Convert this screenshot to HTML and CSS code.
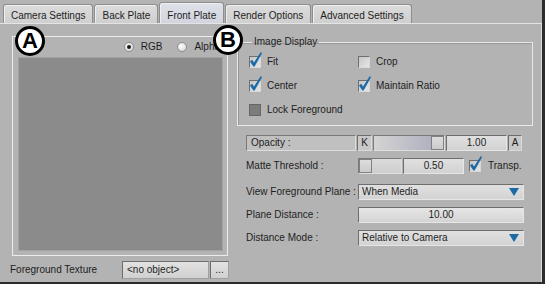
FILE: index.html
```html
<!DOCTYPE html>
<html>

<head>
    <meta charset="utf-8" />
    <meta name="viewport" content="width=device-width, initial-scale=1.0" />
    <title>Front Plate</title>
    <link rel="stylesheet" href="styles.css">
</head>

<body>
    <div class="window">
        <div class="tabs">
            <div class="tab">Camera Settings</div>
            <div class="tab">Back Plate</div>
            <div class="tab tab-active">Front Plate</div>
            <div class="tab">Render Options</div>
            <div class="tab">Advanced Settings</div>
        </div>

        <div class="panel">
            <div class="left">
                <div class="viewer">
                    <div class="channels">
                        <span class="radio"><span class="radio-dot radio-on"></span>RGB</span>
                        <span class="radio"><span class="radio-dot"></span>Alpha</span>
                    </div>
                    <div class="viewport"></div>
                </div>
                <div class="texture-row">
                    <span class="texture-label">Foreground Texture</span>
                    <span class="btn obj-btn">&lt;no object&gt;</span>
                    <span class="btn dots-btn">...</span>
                </div>
            </div>

            <div class="right">
                <fieldset class="group">
                    <legend>Image Display</legend>
                    <div class="checks">
                        <div class="check">
                            <span class="box">
                                <svg class="tick" width="15" height="17" viewBox="0 0 15 17"><path d="M2 10.5 L4.2 8.8 L6 11.6 L12.8 1 L14 2.2 L6.6 15.6 L5.4 15.6 Z" /></svg>
                            </span>Fit
                        </div>
                        <div class="check"><span class="box"></span>Crop</div>
                        <div class="check">
                            <span class="box">
                                <svg class="tick" width="15" height="17" viewBox="0 0 15 17"><path d="M2 10.5 L4.2 8.8 L6 11.6 L12.8 1 L14 2.2 L6.6 15.6 L5.4 15.6 Z" /></svg>
                            </span>Center
                        </div>
                        <div class="check">
                            <span class="box">
                                <svg class="tick" width="15" height="17" viewBox="0 0 15 17"><path d="M2 10.5 L4.2 8.8 L6 11.6 L12.8 1 L14 2.2 L6.6 15.6 L5.4 15.6 Z" /></svg>
                            </span>Maintain Ratio
                        </div>
                        <div class="check"><span class="box box-disabled"></span>Lock Foreground</div>
                    </div>
                </fieldset>

                <div class="rows">
                    <div class="row">
                        <span class="field-label">Opacity :</span>
                        <span class="key">K</span>
                        <span class="slider slider-opacity"><span class="thumb"></span></span>
                        <span class="value">1.00</span>
                        <span class="key key-a">A</span>
                    </div>
                    <div class="row">
                        <span class="row-label">Matte Threshold :</span>
                        <span class="slider slider-matte"><span class="thumb"></span></span>
                        <span class="value value-matte">0.50</span>
                        <span class="check check-inline">
                            <span class="box">
                                <svg class="tick" width="15" height="17" viewBox="0 0 15 17"><path d="M2 10.5 L4.2 8.8 L6 11.6 L12.8 1 L14 2.2 L6.6 15.6 L5.4 15.6 Z" /></svg>
                            </span>Transp.
                        </span>
                    </div>
                    <div class="row row-spaced">
                        <span class="row-label">View Foreground Plane :</span>
                        <span class="dropdown">When Media<span class="arrow"></span></span>
                    </div>
                    <div class="row">
                        <span class="row-label">Plane Distance :</span>
                        <span class="spinner">10.00</span>
                    </div>
                    <div class="row">
                        <span class="row-label">Distance Mode :</span>
                        <span class="dropdown">Relative to Camera<span class="arrow"></span></span>
                    </div>
                </div>
            </div>
        </div>

        <span class="marker marker-a">A</span>
        <span class="marker marker-b">B</span>
    </div>
</body>

</html>
```

FILE: styles.css
```css
/* Общие стили */
body {
    margin: 0;
    font-family: 'Liberation Sans', Arial, sans-serif;
    font-size: 10px;
    line-height: 1.2;
    color: #1e1e1e;
    background-color: #b3b3b3;
}

.window {
    position: relative;
    width: 545px;
    height: 284px;
    box-sizing: border-box;
    background-color: #b3b3b3;
    border-right: 3px solid #2c2c2c;
    border-bottom: 2px solid #2c2c2c;
}

/* Вкладки */
.tabs {
    display: flex;
    align-items: flex-end;
    gap: 1px;
    height: 24px;
    box-sizing: border-box;
    padding-left: 3px;
    border-bottom: 1px solid #e4e4e4;
}

.tab {
    height: 19px;
    box-sizing: border-box;
    padding: 3px 7px 0;
    line-height: 15px;
    background: linear-gradient(#dcdcdc, #cfcfcf);
    border: 1px solid #8d8d8d;
    border-bottom: none;
    border-radius: 3px 3px 0 0;
    box-shadow: inset 1px 1px 0 #efefef;
    white-space: nowrap;
}

.tab-active {
    height: 21px;
    padding-top: 5px;
    background: linear-gradient(#dfe1e8, #d2d5de);
}

/* Основная панель */
.panel {
    display: flex;
    height: 258px;
    box-sizing: border-box;
    padding: 12px 0 0 10px;
    border-right: 1px solid #dcdcdc;
}

.left {
    width: 220px;
    flex-shrink: 0;
}

.viewer {
    display: flex;
    flex-direction: column;
    height: 220px;
    margin: 0 2px;
    box-sizing: border-box;
    border: 1px solid #ececec;
}

.channels {
    display: flex;
    justify-content: flex-end;
    align-items: center;
    gap: 15px;
    height: 20px;
    padding-right: 7px;
}

.radio {
    display: flex;
    align-items: center;
    gap: 7px;
}

.radio-dot {
    position: relative;
    width: 10px;
    height: 10px;
    box-sizing: border-box;
    border: 1px solid #8e8e8e;
    border-radius: 50%;
    background: radial-gradient(circle at 40% 40%, #ffffff, #cfcfcf);
}

.radio-on::after {
    content: '';
    position: absolute;
    left: 2px;
    top: 2px;
    width: 4px;
    height: 4px;
    border-radius: 50%;
    background: #1a1a1a;
}

.viewport {
    flex: 1;
    margin: 0 4px 4px 5px;
    border: 1px solid #a2a2a2;
    background-color: #8b8b8b;
}

.texture-row {
    display: flex;
    align-items: center;
    margin-top: 5px;
    height: 18px;
}

.texture-label {
    width: 112px;
    flex-shrink: 0;
}

.btn {
    height: 18px;
    box-sizing: border-box;
    line-height: 16px;
    background: linear-gradient(#e2e2e2, #d0d0d0);
    border: 1px solid #6e6e6e;
    border-right-color: #a0a0a0;
    border-bottom-color: #a0a0a0;
}

.obj-btn {
    width: 87px;
    padding-left: 4px;
}

.dots-btn {
    width: 19px;
    margin-left: 1px;
    text-align: center;
}

/* Правая колонка */
.right {
    margin-left: 7px;
    width: 304px;
}

.group {
    width: 296px;
    box-sizing: border-box;
    margin: 0;
    padding: 2px 0 3px 11px;
    border: 1px solid #e8e8e8;
    box-shadow: inset 1px 1px 0 #999999;
}

.group legend {
    margin-left: 3px;
    padding: 0 2px;
    line-height: 12px;
}

.checks {
    display: grid;
    grid-template-columns: 109px 1fr;
    grid-auto-rows: 24px;
}

.check {
    display: flex;
    align-items: center;
    gap: 6px;
}

.box {
    position: relative;
    width: 12px;
    height: 12px;
    box-sizing: border-box;
    flex-shrink: 0;
    background: linear-gradient(135deg, #c6c6c6, #e6e6e6);
    border: 1px solid #6f6f6f;
    border-right-color: #d8d8d8;
    border-bottom-color: #d8d8d8;
}

.box-disabled {
    background: #7c7c7c;
    border-color: #666666;
}

.tick {
    position: absolute;
    left: -2px;
    top: -6px;
}

.tick path {
    fill: #1c6aa6;
}

.rows {
    display: flex;
    flex-direction: column;
    gap: 7px;
    margin-top: 9px;
    padding-left: 9px;
}

.row {
    display: flex;
    align-items: center;
    height: 16px;
}

.row-spaced {
    margin-top: 3px;
}

.row-label {
    width: 112px;
    flex-shrink: 0;
    white-space: nowrap;
}

.field-label {
    width: 110px;
    height: 16px;
    box-sizing: border-box;
    padding-left: 4px;
    line-height: 14px;
    background-color: #c0c0c0;
    border: 1px solid #7a7a7a;
    border-right-color: #dcdcdc;
    border-bottom-color: #dcdcdc;
}

.key {
    width: 15px;
    height: 16px;
    box-sizing: border-box;
    margin-left: 1px;
    line-height: 14px;
    text-align: center;
    background-color: #c8c8c8;
    border: 1px solid #6e6e6e;
    border-right-color: #dadada;
    border-bottom-color: #dadada;
}

.key-a {
    width: 14px;
}

.slider {
    display: flex;
    height: 16px;
    box-sizing: border-box;
    border: 1px solid #7a7a7a;
    border-right-color: #dedede;
    border-bottom-color: #dedede;
}

.slider-opacity {
    width: 72px;
    margin-left: 1px;
    justify-content: flex-end;
    background: linear-gradient(90deg, #d4d4d4, #a9a9bc);
}

.slider-matte {
    width: 44px;
    background: linear-gradient(#dadada, #cecece);
}

.thumb {
    width: 13px;
    box-sizing: border-box;
    background: linear-gradient(#dddddd, #cbcbcb);
    border: 1px solid #808080;
}

.value {
    width: 61px;
    height: 16px;
    box-sizing: border-box;
    margin-left: 1px;
    line-height: 14px;
    text-align: center;
    background: linear-gradient(#e0e0e0, #d2d2d2);
    border: 1px solid #6e6e6e;
    border-right-color: #e6e6e6;
    border-bottom-color: #e6e6e6;
}

.value-matte {
    width: 61px;
}

.check-inline {
    margin-left: 5px;
    gap: 7px;
}

.dropdown {
    display: flex;
    justify-content: space-between;
    align-items: center;
    width: 166px;
    height: 16px;
    box-sizing: border-box;
    padding: 0 4px 0 3px;
    background: linear-gradient(#e0e0e0, #d3d3d3);
    border: 1px solid #6e6e6e;
    border-right-color: #e6e6e6;
    border-bottom-color: #e6e6e6;
}

.arrow {
    width: 0;
    height: 0;
    border-left: 5px solid transparent;
    border-right: 5px solid transparent;
    border-top: 8px solid #1b6aa6;
}

.spinner {
    width: 166px;
    height: 16px;
    box-sizing: border-box;
    line-height: 14px;
    text-align: center;
    background: linear-gradient(#e6e6e6, #d4d4d4);
    border: 1px solid #6e6e6e;
    border-right-color: #e6e6e6;
    border-bottom-color: #e6e6e6;
}

/* Метки A и B поверх интерфейса */
.marker {
    position: absolute;
    width: 30px;
    height: 30px;
    box-sizing: border-box;
    border: 3px solid #000;
    border-radius: 50%;
    background: #fff;
    color: #000;
    font-size: 22px;
    font-weight: bold;
    line-height: 24px;
    text-align: center;
}

.marker-a {
    left: 15px;
    top: 26px;
}

.marker-b {
    left: 213px;
    top: 25px;
}
```
